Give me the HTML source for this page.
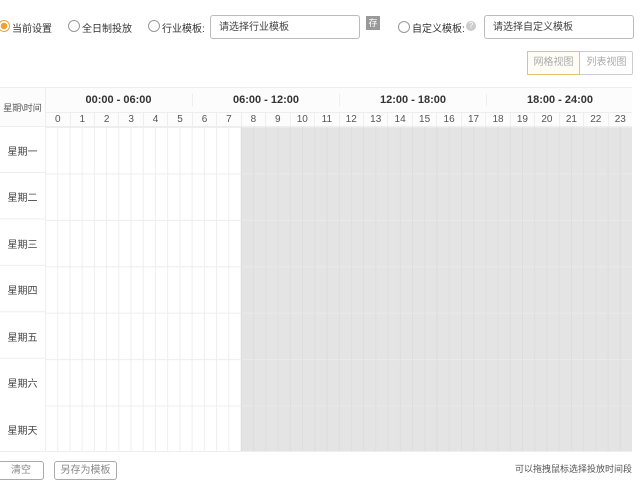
<!DOCTYPE html>
<html><head><meta charset="utf-8"><style>
*{box-sizing:border-box;margin:0;padding:0}
body{width:640px;height:486px;background:#fff;font-family:"Liberation Sans","Noto Sans CJK SC",sans-serif;font-size:10px;color:#333;position:relative;overflow:hidden}
.a{position:absolute;white-space:nowrap}
.radio{width:12px;height:12px;border:1px solid #999;border-radius:50%;background:#fff}
.inp{border:1px solid #bbb;border-radius:3px;height:24px;line-height:24px;padding-left:8px;color:#444}
.grid{left:45px;top:127px;width:587px;height:325px;
background-image:linear-gradient(to right,#eee 1px,transparent 1px),linear-gradient(to bottom,#eee 1px,transparent 1px);
background-size:12.229px 100%,100% 46.43px}
.gray{left:241px;top:127px;width:391px;height:325px;background:#e4e4e4;
background-image:linear-gradient(to right,#ddd 1px,transparent 1px),linear-gradient(to bottom,#eaeaea 1px,transparent 1px);
background-size:12.229px 100%,100% 46.43px}
.hh{top:113px;height:14px;width:24.46px;text-align:center;font-size:10px;color:#555;line-height:14px;border-left:1px solid #eee}
.day{left:0;width:45px;text-align:center;color:#444;font-size:10px}
.btn{border:1px solid #aaa;border-radius:3px;height:19px;line-height:17px;text-align:center;color:#888}
</style></head><body>
<div class="a radio" style="left:-2px;top:20px;border-color:#e8a33a;background:radial-gradient(circle,#f0a030 3px,#fff 3.5px)"></div>
<div class="a" style="left:12px;top:20px">当前设置</div>
<div class="a radio" style="left:68px;top:20px"></div>
<div class="a" style="left:82px;top:20px">全日制投放</div>
<div class="a radio" style="left:148px;top:20px"></div>
<div class="a" style="left:162px;top:20px">行业模板:</div>
<div class="a inp" style="left:210px;top:15px;width:150px">请选择行业模板</div>
<div class="a" style="left:366px;top:16px;width:14px;height:14px;background:#999;color:#fff;font-size:9px;text-align:center;line-height:14px">存</div>
<div class="a radio" style="left:398px;top:21px"></div>
<div class="a" style="left:412px;top:20px">自定义模板:</div>
<div class="a" style="left:466px;top:21px;width:10px;height:10px;border-radius:50%;background:#ccc;color:#fff;font-size:8px;text-align:center;line-height:10px">?</div>
<div class="a inp" style="left:484px;top:15px;width:150px">请选择自定义模板</div>
<div class="a" style="left:527px;top:51px;width:106px;height:24px;border:1px solid #ccc;border-radius:2px"></div>
<div class="a" style="left:527px;top:51px;width:53px;height:24px;border:1px solid #e8c070;background:#fffdf6;color:#aaa;text-align:center;line-height:22px">网格视图</div>
<div class="a" style="left:580px;top:51px;width:53px;height:24px;color:#aaa;text-align:center;line-height:24px">列表视图</div>
<div class="a" style="left:0;top:87px;width:632px;height:40px;background:#fcfcfc;border-top:1px solid #eee;border-bottom:1px solid #eee"></div>
<div class="a" style="left:0;top:101px;width:45px;text-align:center;color:#555;font-size:9px">星期\时间</div>
<div class="a" style="left:45px;top:87px;width:1px;height:365px;background:#eee"></div>
<div class="a" style="left:45px;top:112px;width:587px;height:1px;background:#eee"></div>
<div class="a" style="left:45px;top:94px;width:147px;text-align:center;font-weight:bold;font-size:11px">00:00 - 06:00</div>
<div class="a" style="left:192px;top:94px;width:147px;text-align:center;font-weight:bold;font-size:11px;border-left:1px solid #eee">06:00 - 12:00</div>
<div class="a" style="left:339px;top:94px;width:147px;text-align:center;font-weight:bold;font-size:11px;border-left:1px solid #eee">12:00 - 18:00</div>
<div class="a" style="left:486px;top:94px;width:147px;text-align:center;font-weight:bold;font-size:11px;border-left:1px solid #eee">18:00 - 24:00</div>
<div class="a hh" style="left:45px">0</div><div class="a hh" style="left:69.5px">1</div><div class="a hh" style="left:93.9px">2</div><div class="a hh" style="left:118.4px">3</div><div class="a hh" style="left:142.8px">4</div><div class="a hh" style="left:167.3px">5</div><div class="a hh" style="left:191.8px">6</div><div class="a hh" style="left:216.2px">7</div><div class="a hh" style="left:240.7px">8</div><div class="a hh" style="left:265.1px">9</div><div class="a hh" style="left:289.6px">10</div><div class="a hh" style="left:314.1px">11</div><div class="a hh" style="left:338.5px">12</div><div class="a hh" style="left:363px">13</div><div class="a hh" style="left:387.4px">14</div><div class="a hh" style="left:411.9px">15</div><div class="a hh" style="left:436.4px">16</div><div class="a hh" style="left:460.8px">17</div><div class="a hh" style="left:485.3px">18</div><div class="a hh" style="left:509.7px">19</div><div class="a hh" style="left:534.2px">20</div><div class="a hh" style="left:558.7px">21</div><div class="a hh" style="left:583.1px">22</div><div class="a hh" style="left:607.6px">23</div>
<div class="a grid"></div>
<div class="a gray"></div>
<div class="a" style="left:0;top:172px;width:45px;height:232px;background:linear-gradient(to bottom,#eee 1px,transparent 1px);background-size:100% 46.43px"></div>
<div class="a" style="left:0;top:451px;width:632px;height:1px;background:#eee"></div>
<div class="a day" style="top:143px">星期一</div>
<div class="a day" style="top:189px">星期二</div>
<div class="a day" style="top:236px">星期三</div>
<div class="a day" style="top:282px">星期四</div>
<div class="a day" style="top:329px">星期五</div>
<div class="a day" style="top:375px">星期六</div>
<div class="a day" style="top:422px">星期天</div>
<div class="a btn" style="left:-2px;top:461px;width:46px">清空</div>
<div class="a btn" style="left:54px;top:461px;width:63px">另存为模板</div>
<div class="a" style="right:8px;top:462px;color:#555;font-size:9px">可以拖拽鼠标选择投放时间段</div>
</body></html>
